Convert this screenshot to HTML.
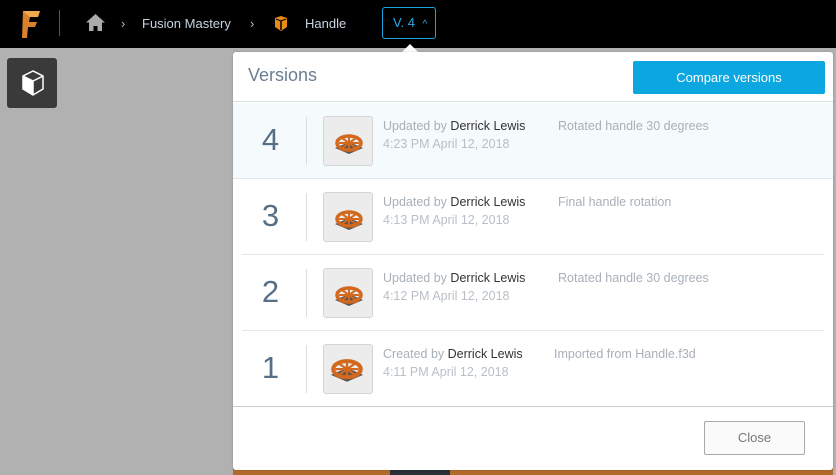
<!DOCTYPE html>
<html><head><meta charset="utf-8"><style>
*{box-sizing:border-box;margin:0;padding:0}
body{width:836px;height:475px;overflow:hidden;background:#b1b1b1;font-family:"Liberation Sans",sans-serif;position:relative}
.top{position:absolute;left:0;top:0;width:836px;height:48px;background:#000}
.crumb{position:absolute;top:16px;color:#c8d4e0;font-size:13px;white-space:nowrap}
.side{position:absolute;left:7px;top:58px;width:50px;height:50px;background:#3a3a3a;border-radius:3px}
.panel{position:absolute;left:233px;top:52px;width:600px;height:418px;background:#fff;border-radius:3px;box-shadow:0 0 2px rgba(0,0,0,.2)}
.hdr{height:50px;border-bottom:1px solid #d8dde2;position:relative}
.hdr h1{position:absolute;left:15px;top:13px;font-weight:normal;font-size:18px;color:#6b7f92}
.cmp{position:absolute;left:400px;top:9px;width:192px;height:33px;background:#0ca7e0;color:#fff;font-size:13px;text-align:center;line-height:33px;border-radius:2px}
.row{position:absolute;left:9px;width:582px;height:76px;border-bottom:1px solid #e3e6ea;white-space:nowrap}
.in{position:absolute;left:9px;top:0;width:582px;height:76px}
.num{position:absolute;left:0;width:57px;top:19px;text-align:center;font-size:31px;color:#566e86}
.vl{position:absolute;left:64px;top:14px;width:1px;height:48px;background:#d9dde1}
.th{position:absolute;left:81px;top:13px;width:50px;height:50px;background:#ececec;border:1px solid #d5d5d5;border-radius:3px}
.th svg{position:absolute;left:7px;top:11px}
.t1{position:absolute;left:141px;top:16px;font-size:12.5px;color:#a8b0b8}
.t1 b{font-weight:normal;color:#333}
.t2{position:absolute;left:141px;top:34px;font-size:12.5px;color:#b8bfc6}
.ds{position:absolute;left:316px;top:16px;font-size:12.5px;color:#a8b0b8}
.close{position:absolute;left:471px;top:369px;width:101px;height:34px;border:1px solid #aaa;border-radius:2px;background:#fafafa;color:#777;font-size:13px;text-align:center;line-height:32px}
</style></head><body>
<svg width="0" height="0" style="position:absolute"><defs><g id="w"><path d="M4 20l14-6 14 6-14 6z" fill="#555"/><ellipse cx="18" cy="15" rx="12" ry="7" fill="none" stroke="#d2691e" stroke-width="3.5"/><path d="M8 15h20M18 8v14M11 10l14 10M25 10L11 20" stroke="#d2691e" stroke-width="2"/><ellipse cx="18" cy="15" rx="3.5" ry="2.2" fill="#d2691e"/></g></defs></svg>
<div class="top">
 <svg style="position:absolute;left:20px;top:9px" width="22" height="30" viewBox="0 0 22 30"><path d="M3 2h17l-2 6H10l-1 5h8l-2 5H8l-1 11H2z" fill="#d9822b"/><path d="M3 2h17l-2 6H10" fill="#f0a84a"/></svg>
 <div style="position:absolute;left:59px;top:10px;width:1px;height:26px;background:#555"></div>
 <svg style="position:absolute;left:86px;top:14px" width="19" height="17" viewBox="0 0 19 17"><path d="M9.5 0L0 8.5h3V17h4.5v-5h4v5H16V8.5h3z" fill="#aaa"/></svg>
 <div class="crumb" style="left:121px;color:#bbb">›</div>
 <div class="crumb" style="left:142px">Fusion Mastery</div>
 <div class="crumb" style="left:250px;color:#bbb">›</div>
 <svg style="position:absolute;left:273px;top:15px" width="16" height="17" viewBox="0 0 16 17"><path d="M2 3l6-2 6 2v9l-6 4-6-4z" fill="#e88a1a"/><path d="M8 6v9" stroke="#000" stroke-width="1.5"/><path d="M3 4l5 2 5-2" stroke="#000" stroke-width="1" fill="none"/></svg>
 <div class="crumb" style="left:305px">Handle</div>
 <div style="position:absolute;left:382px;top:7px;width:54px;height:32px;border:1px solid #1aa3e0;border-radius:3px;color:#2aaae8;font-size:13px;line-height:30px;padding-left:10px;white-space:nowrap">V. 4 <span style="font-size:10px;margin-left:4px">^</span></div>
</div>
<div style="position:absolute;left:401px;top:44px;width:0;height:0;border-left:9px solid transparent;border-right:9px solid transparent;border-bottom:9px solid #fff"></div>
<div style="position:absolute;left:233px;top:462px;width:600px;height:13px;background:#b26a2b"></div>
<div style="position:absolute;left:390px;top:464px;width:60px;height:11px;background:#2a2f38"></div>
<div class="side"><svg style="position:absolute;left:14px;top:11px" width="24" height="28" viewBox="0 0 24 28"><path d="M12 2L2 7v13l10 6 10-6V7z" fill="none" stroke="#fff" stroke-width="1.5"/><path d="M2 7l10 5 10-5M12 12v14" stroke="#fff" stroke-width="1.5" fill="none"/><path d="M2 7l10 5v14L2 20z" fill="#fff"/></svg></div>
<div class="panel">
 <div class="hdr"><h1>Versions</h1><div class="cmp">Compare versions</div></div>
 <div class="row" style="top:51px;background:#f5fafd;left:0;width:600px"><div class="in"><div class="num">4</div><div class="vl"></div><div class="th"><svg width="36" height="28"><use href="#w"/></svg></div><div class="t1">Updated by <b>Derrick Lewis</b></div><div class="t2">4:23 PM April 12, 2018</div><div class="ds">Rotated handle 30 degrees</div></div></div>
 <div class="row" style="top:127px"><div class="num">3</div><div class="vl"></div><div class="th"><svg width="36" height="28"><use href="#w"/></svg></div><div class="t1">Updated by <b>Derrick Lewis</b></div><div class="t2">4:13 PM April 12, 2018</div><div class="ds">Final handle rotation</div></div>
 <div class="row" style="top:203px"><div class="num">2</div><div class="vl"></div><div class="th"><svg width="36" height="28"><use href="#w"/></svg></div><div class="t1">Updated by <b>Derrick Lewis</b></div><div class="t2">4:12 PM April 12, 2018</div><div class="ds">Rotated handle 30 degrees</div></div>
 <div class="row" style="top:279px;left:0;width:600px;border-bottom:1px solid #ccc"><div class="in"><div class="num">1</div><div class="vl"></div><div class="th"><svg width="36" height="28" style="left:5px;top:9px;transform:scale(1.15)"><use href="#w"/></svg></div><div class="t1">Created by <b>Derrick Lewis</b></div><div class="t2">4:11 PM April 12, 2018</div><div class="ds" style="left:312px">Imported from Handle.f3d</div></div></div>
 <div class="close">Close</div>
</div>
</body></html>
